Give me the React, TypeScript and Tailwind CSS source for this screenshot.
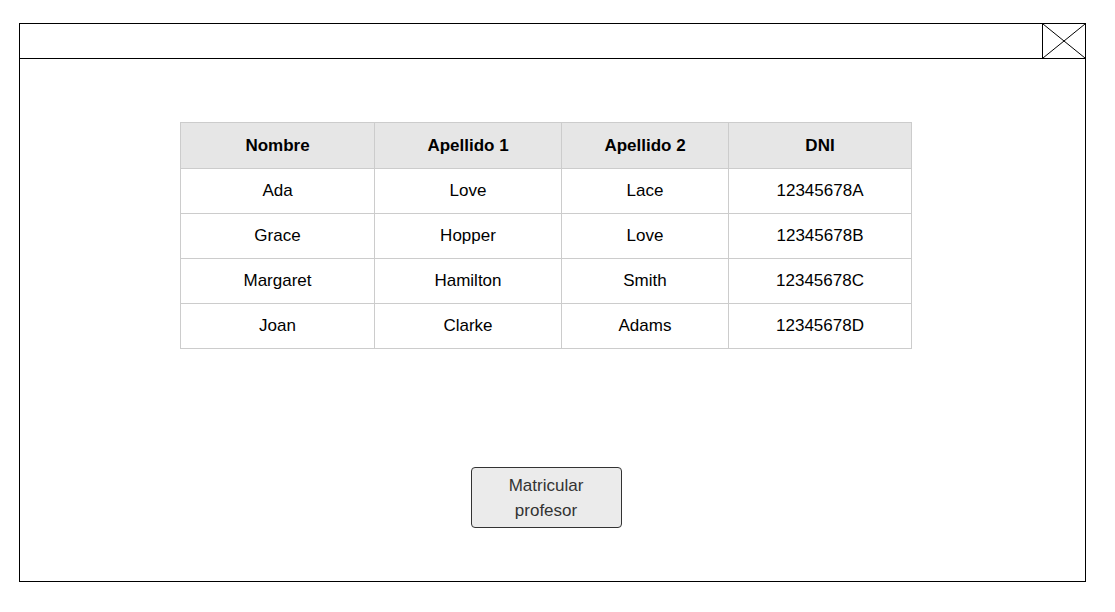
import React from "react";

const cols = ["Nombre", "Apellido 1", "Apellido 2", "DNI"];
const rows = [
  ["Ada", "Love", "Lace", "12345678A"],
  ["Grace", "Hopper", "Love", "12345678B"],
  ["Margaret", "Hamilton", "Smith", "12345678C"],
  ["Joan", "Clarke", "Adams", "12345678D"],
];

export default function App() {
  return (
    <div
      className="w-[1115px] h-[612px] bg-white pl-[19px] pt-[23px]"
      style={{ fontFamily: '"Liberation Sans", Arial, sans-serif' }}
    >
      <div className="w-[1067px] h-[559px] border border-black flex flex-col">
        <div className="h-[35px] border-b border-black flex justify-end shrink-0">
          <div className="w-[43px] h-full border-l border-black">
            <svg width="42" height="34" viewBox="0 0 42 34" className="block">
              <line x1="0" y1="0" x2="42" y2="34" stroke="black" strokeWidth="1" />
              <line x1="42" y1="0" x2="0" y2="34" stroke="black" strokeWidth="1" />
            </svg>
          </div>
        </div>
        <div className="flex flex-col pl-[160px] pt-[63px]">
          <div className="w-[732px] flex flex-col items-center">
            <div className="w-[732px] grid grid-cols-[194px_187px_167px_183px] border-t border-l border-[#cccccc] text-[17px] text-black">
              {cols.map((c) => (
                <div
                  key={c}
                  className="h-[46px] flex items-center justify-center bg-[#e6e6e6] border-r border-b border-[#cccccc] font-bold"
                >
                  {c}
                </div>
              ))}
              {rows.map((r, i) =>
                r.map((v, j) => (
                  <div
                    key={`${i}-${j}`}
                    className="h-[45px] flex items-center justify-center border-r border-b border-[#cccccc]"
                  >
                    {v}
                  </div>
                ))
              )}
            </div>
            <button className="mt-[118px] w-[151px] h-[61px] rounded-[4px] border border-[#333333] bg-[#ebebeb] text-[17px] leading-[25px] text-[#333333] flex items-center justify-center text-center">
              Matricular
              <br />
              profesor
            </button>
          </div>
        </div>
      </div>
    </div>
  );
}
